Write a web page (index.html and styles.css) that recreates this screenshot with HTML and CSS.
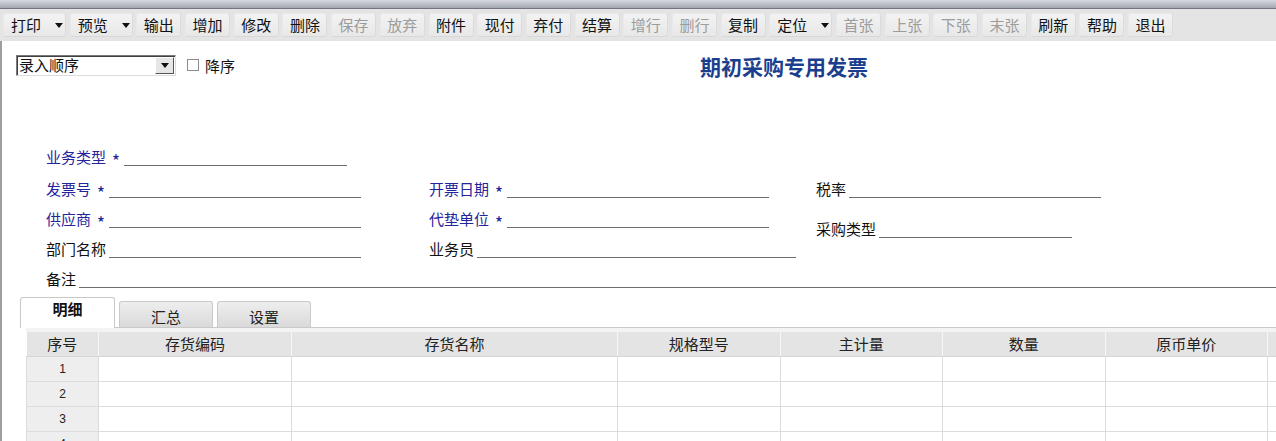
FILE: index.html
```html
<!DOCTYPE html>
<html lang="zh-CN">
<head>
    <meta charset="UTF-8">
    <meta name="viewport" content="width=device-width, initial-scale=1.0">
    <title>期初采购专用发票</title>
    <link rel="stylesheet" href="styles.css">
</head>
<body>
    <div class="titlebar"></div>

    <div class="toolbar">
        <div class="tb-btn has-menu">打印<span class="caret"></span></div>
        <div class="tb-btn has-menu">预览<span class="caret"></span></div>
        <div class="tb-btn">输出</div>
        <div class="tb-btn">增加</div>
        <div class="tb-btn">修改</div>
        <div class="tb-btn">删除</div>
        <div class="tb-btn disabled">保存</div>
        <div class="tb-btn disabled">放弃</div>
        <div class="tb-btn">附件</div>
        <div class="tb-btn">现付</div>
        <div class="tb-btn">弃付</div>
        <div class="tb-btn">结算</div>
        <div class="tb-btn disabled">增行</div>
        <div class="tb-btn disabled">删行</div>
        <div class="tb-btn">复制</div>
        <div class="tb-btn has-menu">定位<span class="caret"></span></div>
        <div class="tb-btn disabled">首张</div>
        <div class="tb-btn disabled">上张</div>
        <div class="tb-btn disabled">下张</div>
        <div class="tb-btn disabled">末张</div>
        <div class="tb-btn">刷新</div>
        <div class="tb-btn">帮助</div>
        <div class="tb-btn">退出</div>
    </div>

    <div class="main">
        <div class="sort-row">
            <div class="combo">
                <span class="combo-text">录入顺序</span>
                <span class="combo-btn"><span class="caret"></span></span>
            </div>
            <label class="check"><span class="check-box"></span>降序</label>
            <h1 class="doc-title">期初采购专用发票</h1>
        </div>

        <div class="head-form">
            <div class="field c1 r1"><span class="lbl req">业务类型</span><span class="star">*</span><span class="line w223"></span></div>

            <div class="field c1 r2"><span class="lbl req">发票号</span><span class="star">*</span><span class="line w252"></span></div>
            <div class="field c2 r2"><span class="lbl req">开票日期</span><span class="star">*</span><span class="line w262"></span></div>
            <div class="field c3 r2"><span class="lbl">税率</span><span class="line w252"></span></div>

            <div class="field c1 r3"><span class="lbl req">供应商</span><span class="star">*</span><span class="line w252"></span></div>
            <div class="field c2 r3"><span class="lbl req">代垫单位</span><span class="star">*</span><span class="line w262"></span></div>
            <div class="field c3 r3 drop"><span class="lbl">采购类型</span><span class="line w193"></span></div>

            <div class="field c1 r4"><span class="lbl">部门名称</span><span class="line w252"></span></div>
            <div class="field c2 r4"><span class="lbl">业务员</span><span class="line w319"></span></div>

            <div class="field full r5"><span class="lbl">备注</span><span class="line grow"></span></div>
        </div>

        <div class="tabs">
            <div class="tab active">明细</div>
            <div class="tab">汇总</div>
            <div class="tab">设置</div>
        </div>

        <div class="grid-wrap">
            <table class="grid">
                <colgroup>
                    <col class="col-no">
                    <col class="col-code">
                    <col class="col-name">
                    <col class="col-m">
                    <col class="col-m">
                    <col class="col-m">
                    <col class="col-m">
                    <col class="col-m">
                </colgroup>
                <thead>
                    <tr>
                        <th>序号</th>
                        <th>存货编码</th>
                        <th>存货名称</th>
                        <th>规格型号</th>
                        <th>主计量</th>
                        <th>数量</th>
                        <th>原币单价</th>
                        <th></th>
                    </tr>
                </thead>
                <tbody>
                    <tr><td class="no">1</td><td></td><td></td><td></td><td></td><td></td><td></td><td></td></tr>
                    <tr><td class="no">2</td><td></td><td></td><td></td><td></td><td></td><td></td><td></td></tr>
                    <tr><td class="no">3</td><td></td><td></td><td></td><td></td><td></td><td></td><td></td></tr>
                    <tr><td class="no">4</td><td></td><td></td><td></td><td></td><td></td><td></td><td></td></tr>
                </tbody>
            </table>
        </div>
    </div>
</body>
</html>
```

FILE: styles.css
```css
body {
    margin: 0;
    width: 1276px;
    height: 441px;
    overflow: hidden;
    background: #fff;
    color: #111;
    font-family: "Noto Sans CJK SC", "Noto Sans", sans-serif;
    font-size: 15px;
}

.titlebar {
    height: 8px;
    background: linear-gradient(#d6d8de, #a3a7af);
    border-bottom: 1px solid #72767e;
}

/* toolbar */
.toolbar {
    height: 32px;
    box-sizing: border-box;
    padding: 4px 3px;
    background: #e4e4e4;
    display: flex;
    align-items: flex-start;
    gap: 3.7px;
}
.tb-btn {
    width: 45px;
    height: 24px;
    box-sizing: border-box;
    flex: none;
    display: flex;
    align-items: center;
    justify-content: center;
    line-height: 22px;
    color: #111;
    background: linear-gradient(#f3f3f3, #e8e8e8);
    border: 1px solid #e9e9e9;
    border-right-color: #dbdbdb;
    border-bottom-color: #d8d8d8;
    border-radius: 3px;
    cursor: default;
}
.tb-btn.disabled {
    color: #9c9c9c;
}
.tb-btn.has-menu {
    width: 63px;
    justify-content: flex-start;
    padding-left: 7px;
}
.caret {
    display: inline-block;
    width: 0;
    height: 0;
    border-left: 4px solid transparent;
    border-right: 4px solid transparent;
    border-top: 5px solid #111;
}
.tb-btn .caret {
    margin-left: 14px;
}

/* main */
.main {
    border-left: 2px solid #9e9e9e;
    height: 400px;
    padding-top: 12px;
    box-sizing: border-box;
}

.sort-row {
    height: 24px;
    display: flex;
    align-items: center;
    padding-left: 14px;
}
.combo {
    width: 160px;
    height: 21px;
    box-sizing: border-box;
    border: 1px solid #7a7a7a;
    border-right-color: #dcdcdc;
    border-bottom-color: #dcdcdc;
    box-shadow: inset 1px 1px #404040;
    display: flex;
    align-items: center;
    justify-content: space-between;
    padding: 1px 1px 1px 2px;
}
.combo-text {
    line-height: 18px;
}
.combo-btn {
    width: 19px;
    height: 17px;
    box-sizing: border-box;
    background: #e6e6e6;
    border: 1px solid #fff;
    border-right-color: #555;
    border-bottom-color: #555;
    display: flex;
    align-items: center;
    justify-content: center;
}
.check {
    display: flex;
    align-items: center;
    margin-left: 11px;
}
.check-box {
    width: 12px;
    height: 12px;
    box-sizing: border-box;
    border: 1px solid #8c8c8c;
    background: #fff;
    margin-right: 6px;
}
.doc-title {
    margin: 2px 0 0 465px;
    font-size: 21px;
    font-weight: bold;
    color: #1b3f8e;
    line-height: 24px;
}

/* header form */
.head-form {
    margin-top: 59px;
    padding-left: 44px;
    display: grid;
    grid-template-columns: 383px 387px 1fr;
    grid-template-rows: 30px 32px 30px 30px 30px;
}
.field {
    display: flex;
    align-items: flex-end;
    align-self: end;
}
.c1 { grid-column: 1; }
.c2 { grid-column: 2; }
.c3 { grid-column: 3; }
.full { grid-column: 1 / -1; }
.r1 { grid-row: 1; }
.r2 { grid-row: 2; }
.r3 { grid-row: 3; }
.r4 { grid-row: 4; }
.r5 { grid-row: 5; }
.field.drop {
    margin-bottom: -10px;
}
.lbl {
    line-height: 18px;
    white-space: nowrap;
}
.lbl.req,
.star {
    color: #24249c;
}
.star {
    width: 10px;
    margin-left: 5px;
    margin-bottom: -3px;
    text-align: center;
    line-height: 18px;
    font-size: 18px;
}
.line {
    height: 17px;
    margin-left: 3px;
    border-bottom: 1px solid #6e6e6e;
}
.w193 { width: 193px; }
.w223 { width: 223px; }
.w252 { width: 252px; }
.w262 { width: 262px; }
.w319 { width: 319px; }
.grow { flex: 1; }

/* tabs */
.tabs {
    margin: 9px 0 0 18px;
    height: 31px;
    box-sizing: border-box;
    border-bottom: 1px solid #c9c9c9;
    display: flex;
    align-items: flex-end;
    gap: 4px;
}
.tab {
    width: 94px;
    height: 26px;
    box-sizing: border-box;
    border: 1px solid #c9c9c9;
    border-bottom: none;
    border-radius: 3px 3px 0 0;
    background: linear-gradient(#eeeeee, #dadada);
    text-align: center;
    line-height: 30px;
    color: #222;
}
.tab.active {
    width: 95px;
    height: 31px;
    margin-bottom: -1px;
    background: #fff;
    font-weight: bold;
    line-height: 22px;
    color: #111;
}

/* detail grid */
.grid-wrap {
    margin-left: 24px;
    padding-top: 4px;
    background: #f3f3f3;
    width: 1400px;
}
.grid {
    border-collapse: collapse;
    table-layout: fixed;
    width: 1400px;
    background: #fff;
}
.col-no { width: 72px; }
.col-code { width: 193px; }
.col-name { width: 326px; }
.col-m { width: 162.5px; }
.grid th {
    height: 24px;
    padding: 0;
    background: #e4e4e4;
    border-right: 1px solid #f6f6f6;
    border-bottom: 1px solid #d6d6d6;
    font-weight: normal;
    color: #222;
    line-height: 24px;
}
.grid td {
    height: 24px;
    padding: 0;
    border: 1px solid #dcdcdc;
    border-top: none;
}
.grid td.no {
    background: #eeeeee;
    text-align: center;
    font-family: "Liberation Sans", sans-serif;
    font-size: 12px;
    color: #222;
}
```
